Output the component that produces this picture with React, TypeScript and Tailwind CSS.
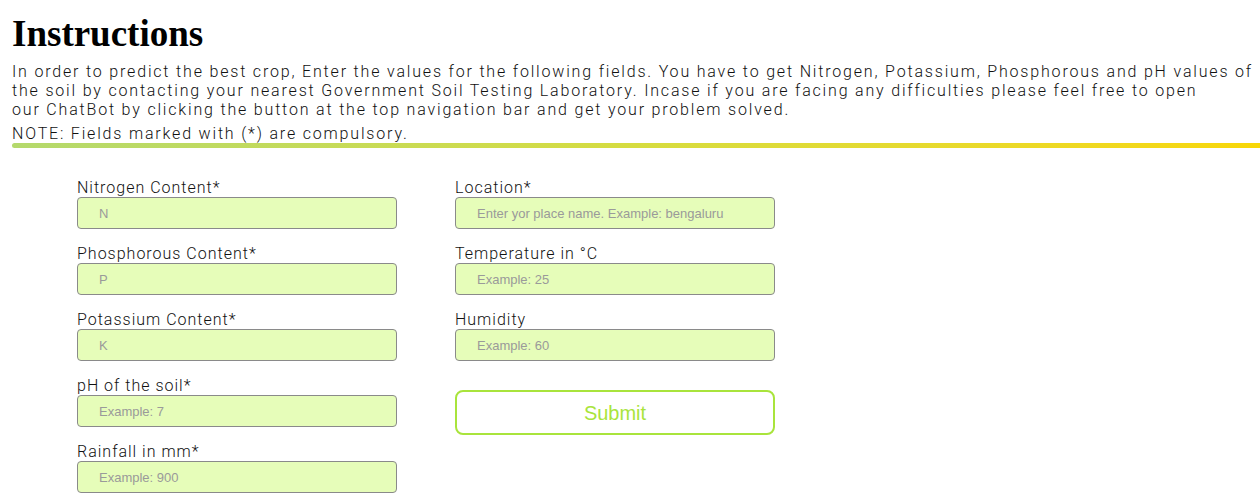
export default function App() {
  const left = [
    { label: "Nitrogen Content*", ph: "N" },
    { label: "Phosphorous Content*", ph: "P" },
    { label: "Potassium Content*", ph: "K" },
    { label: "pH of the soil*", ph: "Example: 7" },
    { label: "Rainfall in mm*", ph: "Example: 900" },
  ];
  const right = [
    { label: "Location*", ph: "Enter yor place name. Example: bengaluru" },
    { label: "Temperature in °C", ph: "Example: 25" },
    { label: "Humidity", ph: "Example: 60" },
  ];

  const field = (f: { label: string; ph: string }) => (
    <div key={f.label} className="mb-[15px]">
      <label className="block text-[16px] leading-[19px] font-light tracking-[1px] text-[#111] font-['Roboto',sans-serif]">
        {f.label}
      </label>
      <input
        placeholder={f.ph}
        className="block w-[320px] h-[32px] rounded-[4px] border border-[#8a8a8a] bg-[#e6fdb9] pl-[21px] text-[13px] font-['Liberation_Sans',Arial,sans-serif] placeholder:text-[#9a9a9a] outline-none"
      />
    </div>
  );

  return (
    <div className="bg-white min-h-screen px-[12px] pt-[14px] overflow-hidden">
      <h1 className="text-[37px] leading-[40px] font-bold text-black font-['Liberation_Serif','DejaVu_Serif',serif]">
        Instructions
      </h1>
      <p className="mt-[8px] text-[16px] leading-[19px] font-light tracking-[1.82px] text-[#111] font-['Roboto',sans-serif] -mr-[12px]">
        In order to predict the best crop, Enter the values for the following fields. You have to get Nitrogen, Potassium, Phosphorous and pH values of the soil by contacting your nearest Government Soil Testing Laboratory. Incase if you are facing any difficulties please feel free to open our{"\u00a0"}ChatBot by clicking the button at the top navigation bar and get your problem solved.
      </p>
      <p className="mt-[5px] text-[16px] leading-[19px] font-light tracking-[1.82px] text-[#111] font-['Roboto',sans-serif]">
        NOTE: Fields marked with (*) are compulsory.
      </p>
      <div className="-mr-[12px] h-[5px] rounded-l-full bg-gradient-to-r from-[#b4d96c] via-[#d6dc3f] to-[#f8d705]" />

      <div className="ml-[65px] mt-[30px] flex gap-[58px]">
        <div>{left.map(field)}</div>
        <div>
          {right.map(field)}
          <button className="mt-[14px] w-[320px] h-[45px] rounded-[8px] border-2 border-[#a9e43c] bg-white text-[20px] text-[#a9e43c] font-['Liberation_Sans',Arial,sans-serif]">
            Submit
          </button>
        </div>
      </div>
    </div>
  );
}
